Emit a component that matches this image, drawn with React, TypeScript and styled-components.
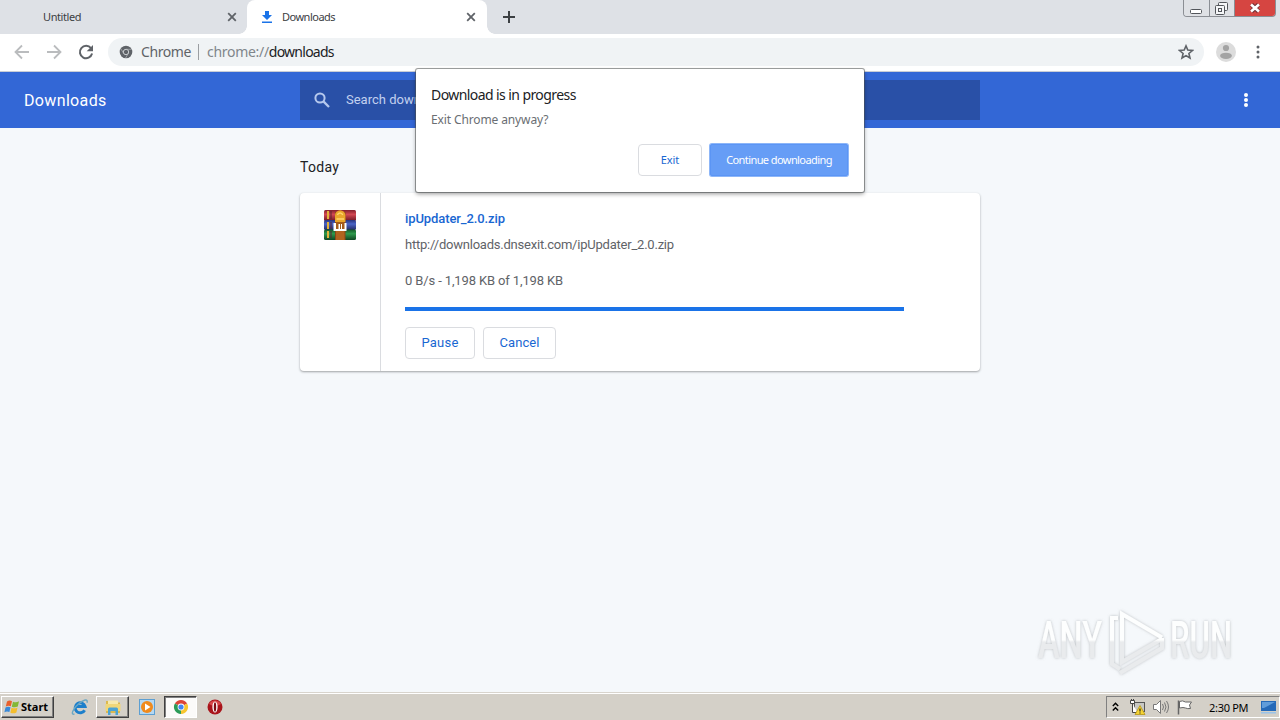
import React from "react";
import styled, { createGlobalStyle } from "styled-components";

const GlobalStyle = createGlobalStyle`
  * {
    box-sizing: border-box;
  }
  body {
    margin: 0;
    overflow: hidden;
  }
  svg {
    display: block;
    flex: none;
  }
  button {
    padding: 0;
    margin: 0;
  }
`;

const Screen = styled.div`
  position: relative;
  display: flex;
  flex-direction: column;
  width: 1280px;
  height: 720px;
  overflow: hidden;
  background: #f5f8fb;
  font-family: "Noto Sans", "Open Sans", sans-serif;
`;

const Label = styled.span<{ $size: number; $spacing?: number; $color?: string; $weight?: number }>`
  font-size: ${(p) => p.$size}px;
  letter-spacing: ${(p) => p.$spacing || 0}px;
  color: ${(p) => p.$color || "inherit"};
  font-weight: ${(p) => p.$weight || 400};
  white-space: pre;
`;

/* Tab strip */

const TabStrip = styled.div`
  display: flex;
  height: 34px;
  flex: none;
  background: #dee1e6;
`;

const Tab = styled.div<{ $active?: boolean }>`
  position: relative;
  display: flex;
  align-items: center;
  width: ${(p) => (p.$active ? 240 : 247)}px;
  height: 34px;
  padding: 0 ${(p) => (p.$active ? 11 : 10)}px 0 ${(p) => (p.$active ? 13 : 43)}px;
  background: ${(p) => (p.$active ? "#fff" : "transparent")};
  border-radius: 8px 8px 0 0;
  color: #3c4043;
  &::before,
  &::after {
    content: "";
    display: ${(p) => (p.$active ? "block" : "none")};
    position: absolute;
    bottom: 0;
    width: 8px;
    height: 8px;
  }
  &::before {
    left: -8px;
    background: radial-gradient(circle at 0 0, transparent 7.5px, #fff 8px);
  }
  &::after {
    right: -8px;
    background: radial-gradient(circle at 100% 0, transparent 7.5px, #fff 8px);
  }
`;

const TabTitle = styled.div`
  flex: 1;
  display: flex;
  align-items: center;
  gap: 8px;
  padding-bottom: 1px;
`;

const NewTab = styled.div`
  display: flex;
  align-items: center;
  padding-left: 15px;
`;

const WindowControls = styled.div`
  display: flex;
  width: 93px;
  height: 17px;
  margin: 0 4px 0 auto;
  border: 1px solid #8b8e94;
  border-top: 0;
  border-radius: 0 0 4px 4px;
  overflow: hidden;
`;

const WindowButton = styled.div<{ $close?: boolean }>`
  display: flex;
  align-items: center;
  justify-content: center;
  width: ${(p) => (p.$close ? 41 : 25)}px;
  background: ${(p) => (p.$close ? "#d64541" : "#dfe1e5")};
  & + & {
    border-left: 1px solid #8b8e94;
  }
`;

/* Toolbar */

const Toolbar = styled.div`
  display: flex;
  align-items: center;
  height: 38px;
  flex: none;
  padding: 0 12px 2px 13px;
  background: #fff;
  border-bottom: 1px solid #c9cdd6;
`;

const NavButtons = styled.div`
  display: flex;
  gap: 14px;
  width: 95px;
`;

const Omnibox = styled.div`
  display: flex;
  align-items: center;
  width: 1096px;
  height: 28px;
  padding: 0 10px 0 11px;
  border-radius: 14px;
  background: #f0f3f5;
`;

const SiteName = styled.div`
  width: 58px;
  padding-left: 8px;
  line-height: 20px;
`;

const Separator = styled.div`
  width: 1px;
  height: 16px;
  margin: 0 8px 0 7px;
  background: #9b9ea2;
`;

const Url = styled.div`
  flex: 1;
  line-height: 20px;
`;

const ToolbarEnd = styled.div`
  display: flex;
  align-items: center;
  gap: 12px;
  margin-left: auto;
`;

/* Downloads page */

const PageHeader = styled.header`
  display: flex;
  align-items: center;
  height: 56px;
  flex: none;
  padding: 0 24px;
  background: #3367d6;
  font-family: Roboto, sans-serif;
`;

const PageTitle = styled.div`
  width: 276px;
  color: #fff;
`;

const SearchBox = styled.div`
  display: flex;
  align-items: center;
  gap: 14px;
  width: 680px;
  height: 40px;
  padding: 0 12px 1px;
  background: #2950a7;
  color: #c3d0ef;
`;

const PageMenu = styled.div`
  margin-left: auto;
`;

const Content = styled.main`
  flex: 1;
  width: 680px;
  margin: 0 auto;
  font-family: Roboto, sans-serif;
`;

const DateHeading = styled.div`
  height: 65px;
  padding-top: 29px;
  line-height: 20px;
  color: #202124;
`;

const Card = styled.div`
  display: flex;
  height: 178px;
  border-radius: 4px;
  background: #fff;
  box-shadow: 0 1px 2px rgba(60, 64, 67, 0.35), 0 1px 3px rgba(60, 64, 67, 0.15);
`;

const FileIcon = styled.div`
  width: 81px;
  padding: 16px 0 0 23px;
  border-right: 1px solid #dadce0;
`;

const Details = styled.div`
  display: flex;
  flex-direction: column;
  align-items: flex-start;
  padding: 15px 24px 0;
  line-height: 20px;
  color: #5f6368;
`;

const Line = styled.div<{ $gap: number }>`
  height: 20px;
  margin-bottom: ${(p) => p.$gap}px;
`;

const Progress = styled.div`
  width: 499px;
  height: 4px;
  margin: 1px 0 16px;
  background: #1a73e8;
`;

const Actions = styled.div`
  display: flex;
  gap: 8px;
`;

const Button = styled.button<{ $width: number; $primary?: boolean }>`
  width: ${(p) => p.$width}px;
  height: 32px;
  padding-bottom: 1px;
  border: 1px solid ${(p) => (p.$primary ? "#5b95f5" : "#dadce0")};
  border-radius: ${(p) => (p.$primary ? 2 : 4)}px;
  background: ${(p) => (p.$primary ? "#669df6" : "#fff")};
  color: ${(p) => (p.$primary ? "#fff" : "#1967d2")};
  box-shadow: ${(p) => (p.$primary ? "0 0 0 1px #8db6f8" : "none")};
  font-family: inherit;
  line-height: 18px;
`;

/* Exit confirmation, over the page */

const Dialog = styled.div`
  position: absolute;
  top: 69px;
  left: 416px;
  display: flex;
  flex-direction: column;
  width: 448px;
  height: 123px;
  padding: 14px 16px 16px 15px;
  border-radius: 2px;
  background: #fff;
  box-shadow: 0 0 0 1px rgba(80, 84, 84, 0.55), 0 2px 4px rgba(0, 0, 0, 0.4);
`;

const DialogLine = styled.div`
  height: 24px;
  line-height: 22px;
`;

const DialogActions = styled.div`
  display: flex;
  justify-content: flex-end;
  gap: 8px;
  margin-top: auto;
`;

const Watermark = styled.div`
  position: absolute;
  top: 604px;
  left: 1032px;
`;

/* Taskbar */

const Taskbar = styled.footer`
  display: flex;
  align-items: center;
  height: 28px;
  flex: none;
  padding: 0 0 0 1px;
  border-top: 1px solid #d8d4cd;
  box-shadow: inset 0 1px #fff;
  background: #d4d0c8;
`;

const StartButton = styled.div`
  display: flex;
  align-items: center;
  gap: 1px;
  width: 53px;
  height: 22px;
  padding-left: 2px;
  border: 1px solid;
  border-color: #fff #404040 #404040 #fff;
  box-shadow: inset -1px -1px #808080;
`;

const QuickLaunch = styled.div`
  display: flex;
  align-items: center;
  margin-left: 10px;
`;

const TaskItem = styled.div<{ $width: number; $state?: "raised" | "pressed" }>`
  display: flex;
  align-items: center;
  justify-content: center;
  width: ${(p) => p.$width}px;
  height: 22px;
  border: 1px solid transparent;
  ${(p) =>
    p.$state === "raised" &&
    `
    border-color: #fff #404040 #404040 #fff;
    box-shadow: inset -1px -1px #808080;
  `}
  ${(p) =>
    p.$state === "pressed" &&
    `
    border-color: #404040 #fff #fff #404040;
    box-shadow: inset 1px 1px #808080;
    background: #fbfaf9;
  `}
`;

const Tray = styled.div`
  display: flex;
  align-items: center;
  width: 174px;
  height: 22px;
  margin-left: auto;
  padding-left: 5px;
  border: 1px solid;
  border-color: #808080 #fff #fff #808080;
`;

const TrayIcon = styled.div<{ $width: number }>`
  width: ${(p) => p.$width}px;
`;

const Clock = styled.div`
  width: 51px;
  padding-bottom: 1px;
  color: #000;
`;

const CloseIcon = () => (
  <svg width="10" height="10" viewBox="0 0 10 10" stroke="#5f6368" strokeWidth="1.8">
    <path d="M1.2 1.2 8.8 8.8M8.8 1.2 1.2 8.8" />
  </svg>
);

const DownloadIcon = () => (
  <svg width="14" height="14" viewBox="0 0 14 14" fill="#1a73e8">
    <path d="M5 1h4v4h3L7 10 2 5h3zM2 11.4h10V13H2z" />
  </svg>
);

const ArrowIcon = ({ forward }: { forward?: boolean }) => (
  <svg width="18" height="18" viewBox="0 0 18 18" fill="none" stroke="#babcbe" strokeWidth="1.8">
    <path d={forward ? "M2 9h13M9 2.5 15.5 9 9 15.5" : "M16 9H3M9 2.5 2.5 9 9 15.5"} />
  </svg>
);

const ReloadIcon = () => (
  <svg width="18" height="18" viewBox="0 0 18 18">
    <path d="M14 5.2A6.2 6.2 0 1 0 15.1 10.6" fill="none" stroke="#5f6368" strokeWidth="2" />
    <path d="M16 2v6.3H9.7z" fill="#5f6368" />
  </svg>
);

const ChromeMono = () => (
  <svg width="14" height="14" viewBox="0 0 14 14">
    <circle cx="7" cy="7" r="6.3" fill="#5f6368" />
    <circle cx="7" cy="7" r="2.7" fill="#5f6368" stroke="#d5d8da" strokeWidth=".9" />
    <path d="M7 4.3h5.6M4.6 8.4 1.8 3.7M9.3 8.4 6.6 13" stroke="#b4b8bb" strokeWidth=".7" />
  </svg>
);

const StarIcon = () => (
  <svg width="16" height="16" viewBox="0 0 16 16" fill="none" stroke="#5f6368" strokeWidth="1.6">
    <path d="m8 1.9 1.8 4.2 4.6.4-3.500 3 1.100 4.500L8 11.600 4 14l1.100-4.500-3.500-3 4.600-.4z" />
  </svg>
);

const AvatarIcon = () => (
  <svg width="20" height="20" viewBox="0 0 20 20">
    <circle cx="10" cy="10" r="10" fill="#dcdcdc" />
    <circle cx="10" cy="6" r="3.1" fill="#a3a3a3" />
    <ellipse cx="10" cy="13.8" rx="5.9" ry="3.1" fill="#a3a3a3" />
  </svg>
);

const DotsIcon = ({ color, r, gap }: { color: string; r: number; gap: number }) => (
  <svg width="20" height="20" viewBox="0 0 20 20" fill={color}>
    <circle cx="10" cy={10 - gap} r={r} />
    <circle cx="10" cy="10" r={r} />
    <circle cx="10" cy={10 + gap} r={r} />
  </svg>
);

const SearchIcon = () => (
  <svg width="20" height="20" viewBox="0 0 20 20" fill="none" stroke="#b5c8ed" strokeWidth="2">
    <circle cx="8" cy="8" r="4.6" />
    <path d="m11.4 11.4 5.6 5.6" strokeWidth="2.3" />
  </svg>
);

const ArchiveIcon = () => (
  <svg width="34" height="32" viewBox="0 0 34 32">
    <defs>
      <linearGradient id="red" x2="0" y2="1">
        <stop stopColor="#84202b" />
        <stop offset=".4" stopColor="#d34853" />
        <stop offset="1" stopColor="#6e1622" />
      </linearGradient>
      <linearGradient id="blue" x2="0" y2="1">
        <stop stopColor="#28327c" />
        <stop offset=".4" stopColor="#4b65c7" />
        <stop offset="1" stopColor="#232a64" />
      </linearGradient>
      <linearGradient id="green" x2="0" y2="1">
        <stop stopColor="#155729" />
        <stop offset=".4" stopColor="#2f9a4d" />
        <stop offset="1" stopColor="#104522" />
      </linearGradient>
    </defs>
    <rect x="1" y="1" width="32" height="11" rx="1.5" fill="url(#red)" />
    <rect x="1" y="11" width="32" height="10" rx="1.5" fill="url(#blue)" />
    <rect x="1" y="20.5" width="32" height="10.5" rx="1.5" fill="url(#green)" />
    <path d="M5 2v8M5 13v7M5 22v7" stroke="#e2b23a" strokeWidth="2" />
    <path d="M8 2v8M8 13v7M8 22v7" stroke="#5b2531" strokeWidth="1" />
    <rect x="12" y="3" width="10.500" height="28" fill="#8c4717" />
    <rect x="13" y="22" width="8.500" height="9" fill="#b2641f" />
    <path d="M12 13V6.500a5 5 0 0 1 10.400 0V13z" fill="#e9a52b" />
    <path d="M14.500 6a2.700 2.700 0 0 1 5.200 0M13.500 10h7.500" stroke="#ffd56c" strokeWidth="1.5" fill="none" />
    <path d="M10.500 14h13v8h-13z" fill="#fff" />
    <path d="M13 13v7h2.500v-5H17v5h1v-5h1v5h2.500v-7z" fill="#a45b19" />
  </svg>
);

const WindowsFlag = () => (
  <svg width="16" height="16" viewBox="0 0 16 16">
    <path d="M3 2.5Q5.500 .8 8 2.200L6.800 7.200Q4.500 6 1.800 7.400z" fill="#e9602b" />
    <path d="M9 2.700q3 1.500 6-.4L13.800 7.500q-3 1.500-6 .2z" fill="#83b735" />
    <path d="M1.500 8.400Q4 7 6.500 8.300L5.400 13Q3 11.700.4 13.200z" fill="#3889d8" />
    <path d="M7.500 8.700q3 1.400 6-.2L12.400 13.500q-3 1.600-6 .2z" fill="#f4bd2c" />
  </svg>
);

const ExplorerLogo = () => (
  <svg width="18" height="18" viewBox="0 0 18 18" fill="none">
    <path d="M13.600 12.200a5 5 0 1 1 .4-3.700H5.500" stroke="#1c7fcb" strokeWidth="3" />
    <path d="M3.500 15.800C-1 18 2 10 8 5.500s9-4.500 8-.8" stroke="#6aa7c4" strokeWidth="1.400" />
  </svg>
);

const FolderIcon = () => (
  <svg width="18" height="18" viewBox="0 0 18 18">
    <path d="M2 3h5l1.500 1.500H16V15H2z" fill="#dcb94e" />
    <path d="M4 2.500h10v5H4z" fill="#f7e9ac" />
    <path d="M1.500 6h15v7h-15z" fill="#f0d778" />
    <path d="M4 17v-6q0-1.500 1.500-1.500h7Q14 9.500 14 11v6h-2.500v-4h-5v4z" fill="#4ba3d3" />
  </svg>
);

const MediaPlayerIcon = () => (
  <svg width="18" height="18" viewBox="0 0 18 18">
    <rect x="1.500" y="1.500" width="15" height="15" fill="#b5d8f2" stroke="#5d9fd2" />
    <circle cx="9" cy="9" r="6" fill="#f08a1c" />
    <path d="M7 5.500 12.500 9 7 12.500z" fill="#fff" />
  </svg>
);

const ChromeLogo = () => (
  <svg width="16" height="16" viewBox="0 0 16 16">
    <path d="M8 8 1.900 4.500A7 7 0 0 1 14.100 4.500z" fill="#dc4437" />
    <path d="M8 8 14.100 4.500A7 7 0 0 1 8 15z" fill="#f7c52f" />
    <path d="M8 8v7A7 7 0 0 1 1.900 4.500z" fill="#2b9b58" />
    <circle cx="8" cy="8" r="3.400" fill="#fff" />
    <circle cx="8" cy="8" r="2.600" fill="#4285f4" />
  </svg>
);

const OperaLogo = () => (
  <svg width="16" height="16" viewBox="0 0 16 16">
    <circle cx="8" cy="8" r="7.500" fill="#a9141b" />
    <path d="M2 5a7 7 0 0 1 12 0Q8 9 2 5z" fill="#d8484a" />
    <ellipse cx="8" cy="8" rx="2.600" ry="5.500" fill="#fff" />
    <ellipse cx="8" cy="8" rx="1.200" ry="4.800" fill="#7d0c12" />
  </svg>
);

const NetworkIcon = () => (
  <svg width="18" height="18" viewBox="0 0 18 18">
    <rect x="5.500" y="4.500" width="10" height="9" fill="#c8c8c4" stroke="#555" />
    <path d="M1.500 2.500v3h4v-3zM3.500 5.500v9h5M2.500 1v2M4.500 1v2" stroke="#444" fill="#fff" />
    <path d="m11 7.500 5 9H6z" fill="#f6d434" stroke="#b59414" strokeWidth=".8" />
    <path d="M11 10.500v3M11 14.500v1" stroke="#222" strokeWidth="1.200" />
  </svg>
);

const SpeakerIcon = () => (
  <svg width="18" height="16" viewBox="0 0 18 16" fill="none" stroke="#777">
    <path d="M1.500 5.500h3L8.500 1.500v13l-4-4h-3z" fill="#fff" />
    <path d="M10.500 5q2 3 0 6M12.500 3.500q3 4.500 0 9M14.500 2q4 6 0 12" />
  </svg>
);

const FlagIcon = () => (
  <svg width="17" height="16" viewBox="0 0 17 16" fill="#fff" stroke="#666">
    <path d="M2.500 2.500q3-1.500 6 .5h6l-2 3 1 3.500q-3 .5-5-.5t-6 0z" />
    <path d="M1.500 1.500v14" strokeWidth="1.500" />
  </svg>
);

const DesktopIcon = () => (
  <svg width="17" height="16" viewBox="0 0 17 16">
    <path d="M1 2h15v10H1z" fill="#2569b8" />
    <path d="M2 3h13L4 9H2z" fill="#609cda" />
    <path d="M1 13h15v1.500H1z" fill="#9ac3e9" />
  </svg>
);

const AnyRunLogo = () => (
  <svg width="210" height="76" viewBox="0 0 210 76" fontFamily="Roboto, sans-serif" fontSize="51">
    <defs>
      <linearGradient id="mark" x1="0" y1="10" x2="0" y2="64" gradientUnits="userSpaceOnUse">
        <stop offset=".48" stopColor="#fdfefe" />
        <stop offset=".52" stopColor="#e9ebed" />
      </linearGradient>
      <filter id="glow">
        <feDropShadow dx="0" dy="0" stdDeviation="1.6" floodColor="#8b8e92" floodOpacity=".55" />
      </filter>
    </defs>
    <g filter="url(#glow)" fill="url(#mark)">
      <text x="6" y="54" textLength="64" lengthAdjust="spacingAndGlyphs" fontWeight="500">ANY</text>
      <text x="138" y="54" textLength="62" lengthAdjust="spacingAndGlyphs" fontWeight="500">RUN</text>
      <g fill="none" stroke="url(#mark)" strokeWidth="4">
        <path d="M86 14h-6v46l8 5" />
        <path d="M90 51V10l40 23.500" />
        <path d="M90 45v13l39-22.500M88 69l42-25V34" />
      </g>
    </g>
  </svg>
);

const App: React.FunctionComponent<{}> = () => {
  return (
    <Screen>
      <GlobalStyle />
      <TabStrip>
        <Tab>
          <TabTitle>
            <Label $size={11} $spacing={-0.4}>Untitled</Label>
          </TabTitle>
          <CloseIcon />
        </Tab>
        <Tab $active>
          <TabTitle>
            <DownloadIcon />
            <Label $size={11} $spacing={-0.5}>Downloads</Label>
          </TabTitle>
          <CloseIcon />
        </Tab>
        <NewTab>
          <svg width="14" height="14" viewBox="0 0 14 14" stroke="#3c4043" strokeWidth="2">
            <path d="M7 1v12M1 7h12" />
          </svg>
        </NewTab>
        <WindowControls>
          <WindowButton>
            <svg width="13" height="14" viewBox="0 0 13 14" fill="#fff" stroke="#53565b">
              <rect x=".5" y="8.500" width="11" height="4" rx="1" />
            </svg>
          </WindowButton>
          <WindowButton>
            <svg width="14" height="14" viewBox="0 0 14 14" fill="#f5f6f8" stroke="#53565b">
              <rect x="3.500" y="1.500" width="9" height="8" rx="1" />
              <rect x=".5" y="4.500" width="9" height="9" rx="1" />
              <rect x="3.500" y="7.500" width="3" height="3" />
            </svg>
          </WindowButton>
          <WindowButton $close>
            <svg width="14" height="12" viewBox="0 0 14 12" fill="none">
              <path d="m3.500 2.500 7 7M10.500 2.500l-7 7" stroke="#703238" strokeWidth="4.500" />
              <path d="m3 2.500 8 7M11 2.500l-8 7" stroke="#fff" strokeWidth="2.600" />
            </svg>
          </WindowButton>
        </WindowControls>
      </TabStrip>
      <Toolbar>
        <NavButtons>
          <ArrowIcon />
          <ArrowIcon forward />
          <ReloadIcon />
        </NavButtons>
        <Omnibox>
          <ChromeMono />
          <SiteName>
            <Label $size={14} $spacing={-0.4} $color="#5f6368">Chrome</Label>
          </SiteName>
          <Separator />
          <Url>
            <Label $size={14} $spacing={-0.3} $color="#80868b">chrome://</Label>
            <Label $size={14} $spacing={-0.75} $color="#202124">downloads</Label>
          </Url>
          <StarIcon />
        </Omnibox>
        <ToolbarEnd>
          <AvatarIcon />
          <DotsIcon color="#5f6368" r={1.5} gap={5} />
        </ToolbarEnd>
      </Toolbar>
      <PageHeader>
        <PageTitle>
          <Label $size={16} $spacing={0.35}>Downloads</Label>
        </PageTitle>
        <SearchBox>
          <SearchIcon />
          <Label $size={13} $spacing={0}>Search downloads</Label>
        </SearchBox>
        <PageMenu>
          <DotsIcon color="#fff" r={2} gap={5} />
        </PageMenu>
      </PageHeader>
      <Content>
        <DateHeading>
          <Label $size={14} $spacing={0.3}>Today</Label>
        </DateHeading>
        <Card>
          <FileIcon>
            <ArchiveIcon />
          </FileIcon>
          <Details>
            <Line $gap={6}>
              <Label $size={13} $spacing={-0.1} $color="#1967d2" $weight={500}>ipUpdater_2.0.zip</Label>
            </Line>
            <Line $gap={16}>
              <Label $size={13} $spacing={-0.22}>http://downloads.dnsexit.com/ipUpdater_2.0.zip</Label>
            </Line>
            <Line $gap={16}>
              <Label $size={13} $spacing={-0.13}>0 B/s - 1,198 KB of 1,198 KB</Label>
            </Line>
            <Progress />
            <Actions>
              <Button $width={70}>
                <Label $size={13} $spacing={0.2}>Pause</Label>
              </Button>
              <Button $width={73}>
                <Label $size={13} $spacing={0.1}>Cancel</Label>
              </Button>
            </Actions>
          </Details>
        </Card>
      </Content>
      <Taskbar>
        <StartButton>
          <WindowsFlag />
          <Label $size={11} $spacing={0} $weight={700}>Start</Label>
        </StartButton>
        <QuickLaunch>
          <TaskItem $width={32}><ExplorerLogo /></TaskItem>
          <TaskItem $width={33} $state="raised"><FolderIcon /></TaskItem>
          <TaskItem $width={35}><MediaPlayerIcon /></TaskItem>
          <TaskItem $width={33} $state="pressed"><ChromeLogo /></TaskItem>
          <TaskItem $width={35}><OperaLogo /></TaskItem>
        </QuickLaunch>
        <Tray>
          <TrayIcon $width={17}>
            <svg width="7" height="10" viewBox="0 0 7 10" fill="none" stroke="#000" strokeWidth="1.400">
              <path d="m.8 4 2.700-2.700L6.200 4M.8 8.500l2.700-2.700 2.700 2.700" />
            </svg>
          </TrayIcon>
          <TrayIcon $width={23}><NetworkIcon /></TrayIcon>
          <TrayIcon $width={25}><SpeakerIcon /></TrayIcon>
          <TrayIcon $width={32}><FlagIcon /></TrayIcon>
          <Clock>
            <Label $size={11} $spacing={-0.3}>2:30 PM</Label>
          </Clock>
          <DesktopIcon />
        </Tray>
      </Taskbar>
      <Dialog>
        <DialogLine>
          <Label $size={14} $spacing={-0.58} $color="#202124">Download is in progress</Label>
        </DialogLine>
        <DialogLine>
          <Label $size={12} $spacing={-0.12} $color="#6a6e73">Exit Chrome anyway?</Label>
        </DialogLine>
        <DialogActions>
          <Button $width={64}>
            <Label $size={11} $spacing={-0.1}>Exit</Label>
          </Button>
          <Button $width={138} $primary>
            <Label $size={11} $spacing={-0.58}>Continue downloading</Label>
          </Button>
        </DialogActions>
      </Dialog>
      <Watermark>
        <AnyRunLogo />
      </Watermark>
    </Screen>
  );
};

export default App;
